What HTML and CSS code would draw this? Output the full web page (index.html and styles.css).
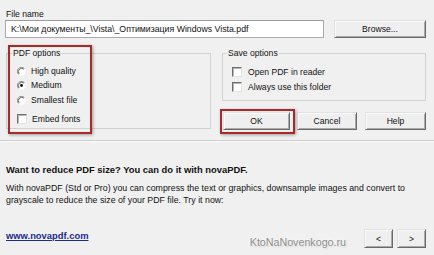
FILE: index.html
```html
<!DOCTYPE html>
<html lang="en">
<head>
<meta charset="utf-8">
<title>novaPDF</title>
<link rel="stylesheet" href="styles.css">
</head>
<body>
<div class="dlg">
  <div class="top">
    <div class="lbl">File name</div>
    <div class="filerow">
      <div class="input">K:\Мои документы_\Vista\_Оптимизация Windows Vista.pdf</div>
      <button class="btn browse">Browse...</button>
    </div>
    <div class="opts">
      <div class="leftwrap">
        <fieldset class="group pdfopts">
          <legend>PDF options</legend>
          <div class="row"><svg class="radio" width="9" height="9" viewBox="0 0 12 12"><circle cx="6" cy="6" r="5.5" fill="#fff"/><path d="M2.1 9.9A5.5 5.5 0 0 1 9.9 2.1" fill="none" stroke="#8a8a8a" stroke-width="1.2"/><path d="M2.9 9.1A4.4 4.4 0 0 1 9.1 2.9" fill="none" stroke="#404040" stroke-width="1.1"/></svg><span>High quality</span></div>
          <div class="row"><svg class="radio" width="9" height="9" viewBox="0 0 12 12"><circle cx="6" cy="6" r="5.5" fill="#fff"/><path d="M2.1 9.9A5.5 5.5 0 0 1 9.9 2.1" fill="none" stroke="#8a8a8a" stroke-width="1.2"/><path d="M2.9 9.1A4.4 4.4 0 0 1 9.1 2.9" fill="none" stroke="#404040" stroke-width="1.1"/><circle cx="6" cy="6" r="1.9" fill="#111"/></svg><span>Medium</span></div>
          <div class="row r3"><svg class="radio" width="9" height="9" viewBox="0 0 12 12"><circle cx="6" cy="6" r="5.5" fill="#fff"/><path d="M2.1 9.9A5.5 5.5 0 0 1 9.9 2.1" fill="none" stroke="#8a8a8a" stroke-width="1.2"/><path d="M2.9 9.1A4.4 4.4 0 0 1 9.1 2.9" fill="none" stroke="#404040" stroke-width="1.1"/></svg><span>Smallest file</span></div>
          <div class="row r4"><span class="check"></span><span>Embed fonts</span></div>
        </fieldset>
        <div class="hl hl-pdf"></div>
      </div>
      <div class="rightcol">
        <fieldset class="group saveopts">
          <legend>Save options</legend>
          <div class="row"><span class="check"></span><span>Open PDF in reader</span></div>
          <div class="row r2"><span class="check"></span><span>Always use this folder</span></div>
        </fieldset>
        <div class="btnrow">
          <div class="okwrap"><button class="btn ok">OK</button><div class="hl hl-ok"></div></div>
          <button class="btn cancel">Cancel</button>
          <button class="btn help">Help</button>
        </div>
      </div>
    </div>
  </div>
  <div class="sep"></div>
  <div class="bottom">
    <div class="heading">Want to reduce PDF size? You can do it with novaPDF.</div>
    <p class="para">With novaPDF (Std or Pro) you can compress the text or graphics, downsample images and convert to grayscale to reduce the size of your PDF file. Try it now:</p>
    <div class="foot">
      <a class="link" href="#">www.novapdf.com</a>
      <span class="wm">KtoNaNovenkogo.ru</span>
      <div class="nav">
        <button class="btn navbtn">&lt;</button>
        <button class="btn navbtn">&gt;</button>
      </div>
    </div>
  </div>
</div>
</body>
</html>
```

FILE: styles.css
```css
html, body {
  margin: 0;
  padding: 0;
}
body {
  background: #f0f0f0;
  font-family: "Liberation Sans", Arial, sans-serif;
  font-size: 8.6px;
  color: #111;
}
.dlg {
  width: 434px;
  height: 255px;
  overflow: hidden;
}
.top {
  box-sizing: border-box;
  height: 140px;
  padding: 8px 8px 0 5px;
}
.lbl {
  line-height: 12px;
  padding-left: 1px;
}
.filerow {
  display: flex;
  gap: 10px;
  height: 18px;
}
.input {
  flex: 0 0 319px;
  box-sizing: border-box;
  border: 1px solid #a9abb1;
  border-top-color: #9a9ca2;
  background: #fff;
  padding: 0 5px;
  font-size: 8.75px;
  line-height: 16px;
  white-space: nowrap;
  overflow: hidden;
}
.btn {
  box-sizing: border-box;
  margin: 0;
  padding: 0;
  font: inherit;
  color: #111;
  background: #efefef;
  border: 1px solid;
  border-color: #e2e2e2 #6a6a6a #6a6a6a #e2e2e2;
  box-shadow: inset 1px 1px 0 #fafafa, inset -1px -1px 0 #a9a9a9;
  border-radius: 0;
}
.browse {
  width: 92px;
  height: 18px;
}
.opts {
  display: flex;
  margin-top: 9px;
  margin-left: 1px;
}
.leftwrap {
  position: relative;
  width: 205px;
}
.group {
  margin: 0;
  min-width: 0;
  border: 1px solid #d2d2d2;
}
.group legend {
  padding: 0 1px;
  line-height: 12px;
}
.pdfopts {
  padding: 5px 0 2px 10px;
}
.pdfopts legend {
  margin-left: -5px;
}
.saveopts {
  padding: 6px 0 6px 9px;
}
.saveopts legend {
  margin-left: -5px;
}
.row {
  display: flex;
  align-items: center;
  height: 14px;
  line-height: 14px;
}
.row .radio {
  margin-right: 5px;
  flex: none;
}
.pdfopts .r3 {
  margin-top: 1px;
}
.pdfopts .r4 {
  margin-top: 5px;
}
.saveopts .r2 {
  margin-top: 1px;
}
.check {
  box-sizing: border-box;
  flex: none;
  width: 10px;
  height: 10px;
  background: #fff;
  border: 1px solid;
  border-color: #707070 #e4e4e4 #e4e4e4 #707070;
  box-shadow: inset 1px 1px 0 #b5b5b5;
  margin-right: 5px;
}
.saveopts .check {
  margin-right: 6px;
}
.rightcol {
  margin-left: 11px;
  width: 204px;
}
.btnrow {
  display: flex;
  margin-top: 11px;
  height: 18px;
}
.okwrap {
  position: relative;
  margin-left: 1px;
  width: 67px;
}
.ok {
  width: 67px;
  height: 18px;
}
.cancel {
  margin-left: 7px;
  width: 60px;
}
.help {
  margin-left: 8px;
  width: 61px;
}
.hl {
  position: absolute;
  box-sizing: border-box;
  border: 2px solid #a62a2c;
  box-shadow: 1px 1px 3px rgba(0, 0, 0, 0.35), inset 0 0 1px rgba(120, 0, 0, 0.3);
  pointer-events: none;
}
.hl-pdf {
  left: 2px;
  top: -2px;
  width: 84px;
  height: 89px;
}
.hl-ok {
  left: -3px;
  top: -3px;
  width: 75px;
  height: 25px;
}
.sep {
  height: 0;
  border-top: 1px solid #cdcdcd;
  border-bottom: 1px solid #fbfbfb;
}
.bottom {
  padding: 22px 8px 0 6px;
}
.heading {
  font-weight: bold;
  font-size: 9.4px;
  line-height: 12px;
}
.para {
  margin: 6px 0 0;
  font-size: 8.8px;
  line-height: 12px;
}
.foot {
  display: flex;
  margin-top: 23px;
  height: 19px;
}
.link {
  align-self: flex-start;
  margin-top: 1px;
  font-weight: bold;
  font-size: 9.4px;
  line-height: 12px;
  color: #202c8c;
  text-decoration: underline;
}
.wm {
  align-self: flex-end;
  margin-left: auto;
  margin-right: 18px;
  font-size: 10.7px;
  line-height: 12px;
  color: #8c8c8c;
  text-shadow: 0 0 2px #fff, 0 0 3px #fff, 1px 1px 2px rgba(0, 0, 0, 0.18);
}
.nav {
  display: flex;
  gap: 4px;
}
.navbtn {
  width: 29px;
  height: 19px;
}
```
